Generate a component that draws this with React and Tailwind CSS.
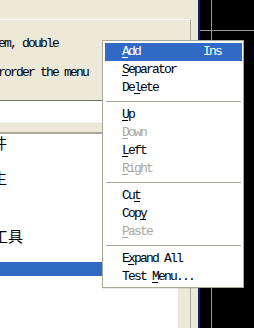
import React from "react";

const mono = { fontFamily: '"Liberation Mono", "Noto Sans CJK SC", monospace' };

const items = [
  { label: "Add", u: 0, key: "Ins", active: true },
  { label: "Separator", u: 0 },
  { label: "Delete", u: 2 },
  "sep",
  { label: "Up", u: 0 },
  { label: "Down", u: 0, disabled: true },
  { label: "Left", u: 0 },
  { label: "Right", u: 0, disabled: true },
  "sep",
  { label: "Cut", u: 2 },
  { label: "Copy", u: 3 },
  { label: "Paste", u: 0, disabled: true },
  "sep",
  { label: "Expand All", u: 1 },
  { label: "Test Menu...", u: 5 },
];

const Label = ({ text, u }) => (
  <span>
    {text.slice(0, u)}
    <span className="underline underline-offset-[2px]">{text[u]}</span>
    {text.slice(u + 1)}
  </span>
);

const MenuRow = ({ item }) => {
  if (item === "sep") {
    return <div className="h-[9px] flex items-center px-[1px]"><div className="h-px w-full bg-[#aca899]" /></div>;
  }
  return (
    <div
      className={`h-[18px] flex items-center pl-[17px] pr-[21px] ${
        item.active ? "bg-[#316ac5] text-white" : item.disabled ? "text-[#aca899]" : "text-black"
      }`}
    >
      <Label text={item.label} u={item.u} />
      {item.key && <span className="ml-auto">{item.key}</span>}
    </div>
  );
};

export default function App() {
  return (
    <div className="relative w-[254px] h-[328px] overflow-hidden flex bg-black text-[13px] tracking-[-1.8px]" style={mono}>
      {/* left work area */}
      <div className="w-[198px] shrink-0 flex flex-col bg-[#ece9d8]">
        <div className="h-[19px]" />
        <div className="w-[191px] h-[82px] border-t border-white border-r border-r-[#aca899] border-b border-b-[#716f64] pt-[17px] overflow-hidden whitespace-nowrap">
          <div className="leading-[14px] -ml-[2px]">em, double</div>
          <div className="leading-[14px] -ml-[2px] mt-[15px]">rorder the menu</div>
        </div>
        <div className="flex flex-1 min-h-0">
          <div className="w-[191px] flex flex-col border-r border-r-[#aca899]">
            <div className="h-[21px] bg-white" />
            <div className="h-[12px] bg-[#ece9d8] border-t border-t-[#f5f4ef] border-b-2 border-b-[#aca899]" />
            <div className="flex flex-1 min-h-0">
              <div
                className="flex-1 bg-white overflow-hidden text-[15px] tracking-normal text-black"
                style={{ fontFamily: '"Noto Sans CJK SC", sans-serif' }}
              >
                <div className="h-[16px] leading-[16px] mt-[1px] -ml-[23px]">文件</div>
                <div className="h-[16px] leading-[16px] mt-[19px] -ml-[23px]">编生</div>
                <div className="h-[16px] leading-[16px] mt-[16px] -ml-[30px]">选项</div>
                <div className="h-[16px] leading-[16px] mt-[10px] -ml-[7px]">工具</div>
                <div className="h-[14px] mt-[18px] bg-[#316ac5]" />
              </div>
              <div className="w-[12px] bg-[#ece9d8]" />
            </div>
          </div>
        </div>
      </div>
      <div className="w-[2px] shrink-0 bg-[#0a246a]" />
      {/* dark canvas */}
      <div className="flex-1">
        <svg width="54" height="328" className="block">
          <line x1="11.5" y1="0" x2="11.5" y2="328" stroke="#9a9a9a" strokeWidth="1" />
          <line x1="0" y1="30.5" x2="54" y2="30.5" stroke="#9a9a9a" strokeWidth="1" />
        </svg>
      </div>

      {/* popup menu */}
      <div className="absolute left-[102px] top-[40px] w-[142px] bg-white border border-[#aca899] pl-[2px] pr-[1px] pt-[2px] pb-[1px] shadow-[1px_1px_0_rgba(0,0,0,0.08)]">
        {items.map((it, i) => (
          <MenuRow key={i} item={it} />
        ))}
      </div>
    </div>
  );
}
